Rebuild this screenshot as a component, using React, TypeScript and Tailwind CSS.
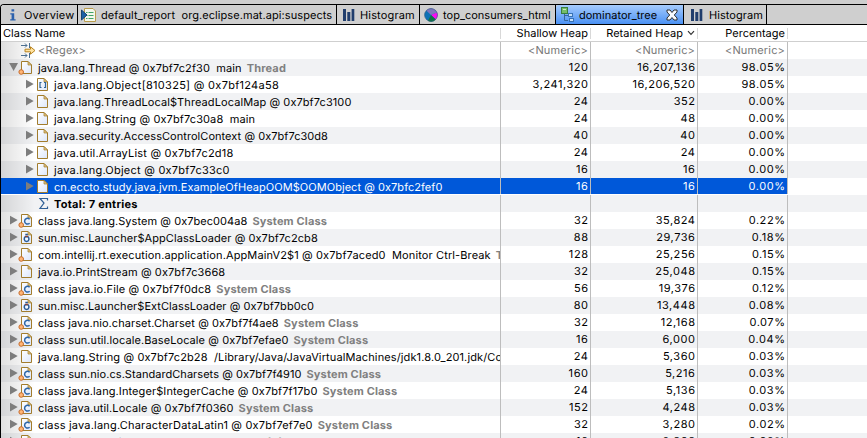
import type { ReactNode } from "react";

type IconKind = "page" | "pageRoot" | "array" | "class" | "loader" | "sum";

interface Row {
  icon: IconKind;
  name: string;
  spacing: string;
  tag?: string;
  nested?: boolean;
  open?: boolean;
  selected?: boolean;
  shallow?: string;
  retained?: string;
  percent?: string;
}

const rows: Row[] = [
  { icon: "pageRoot", spacing: "tracking-[0.09px]", name: "java.lang.Thread @ 0x7bf7c2f30  main", tag: "Thread", open: true, shallow: "120", retained: "16,207,136", percent: "98.05%" },
  { icon: "array", spacing: "tracking-[0.29px]", nested: true, name: "java.lang.Object[810325] @ 0x7bf124a58", shallow: "3,241,320", retained: "16,206,520", percent: "98.05%" },
  { icon: "page", spacing: "tracking-[0.09px]", nested: true, name: "java.lang.ThreadLocal$ThreadLocalMap @ 0x7bf7c3100", shallow: "24", retained: "352", percent: "0.00%" },
  { icon: "page", spacing: "tracking-[0.12px]", nested: true, name: "java.lang.String @ 0x7bf7c30a8  main", shallow: "24", retained: "48", percent: "0.00%" },
  { icon: "page", spacing: "tracking-[0.05px]", nested: true, name: "java.security.AccessControlContext @ 0x7bf7c30d8", shallow: "40", retained: "40", percent: "0.00%" },
  { icon: "page", spacing: "tracking-[0.2px]", nested: true, name: "java.util.ArrayList @ 0x7bf7c2d18", shallow: "24", retained: "24", percent: "0.00%" },
  { icon: "page", spacing: "tracking-[0.24px]", nested: true, name: "java.lang.Object @ 0x7bf7c33c0", shallow: "16", retained: "16", percent: "0.00%" },
  { icon: "page", spacing: "tracking-[0.05px]", nested: true, selected: true, name: "cn.eccto.study.java.jvm.ExampleOfHeapOOM$OOMObject @ 0x7bfc2fef0", shallow: "16", retained: "16", percent: "0.00%" },
  { icon: "sum", spacing: "tracking-[0.25px]", nested: true, name: "Total: 7 entries" },
  { icon: "class", spacing: "tracking-[0.06px]", name: "class java.lang.System @ 0x7bec004a8", tag: "System Class", shallow: "32", retained: "35,824", percent: "0.22%" },
  { icon: "loader", spacing: "tracking-[0.07px]", name: "sun.misc.Launcher$AppClassLoader @ 0x7bf7c2cb8", shallow: "88", retained: "29,736", percent: "0.18%" },
  { icon: "pageRoot", spacing: "tracking-[0.12px]", name: "com.intellij.rt.execution.application.AppMainV2$1 @ 0x7bf7aced0  Monitor Ctrl-Break", tag: "Thread", shallow: "128", retained: "25,256", percent: "0.15%" },
  { icon: "page", spacing: "tracking-[0.11px]", name: "java.io.PrintStream @ 0x7bf7c3668", shallow: "32", retained: "25,048", percent: "0.15%" },
  { icon: "class", spacing: "tracking-[0.15px]", name: "class java.io.File @ 0x7bf7f0dc8", tag: "System Class", shallow: "56", retained: "19,376", percent: "0.12%" },
  { icon: "loader", spacing: "tracking-[0.06px]", name: "sun.misc.Launcher$ExtClassLoader @ 0x7bf7bb0c0", shallow: "80", retained: "13,448", percent: "0.08%" },
  { icon: "class", spacing: "tracking-[0.06px]", name: "class java.nio.charset.Charset @ 0x7bf7f4ae8", tag: "System Class", shallow: "32", retained: "12,168", percent: "0.07%" },
  { icon: "class", spacing: "tracking-[0.08px]", name: "class sun.util.locale.BaseLocale @ 0x7bf7efae0", tag: "System Class", shallow: "16", retained: "6,000", percent: "0.04%" },
  { icon: "page", spacing: "tracking-[0.12px]", name: "java.lang.String @ 0x7bf7c2b28  /Library/Java/JavaVirtualMachines/jdk1.8.0_201.jdk/Contents", shallow: "24", retained: "5,360", percent: "0.03%" },
  { icon: "class", spacing: "tracking-[0.05px]", name: "class sun.nio.cs.StandardCharsets @ 0x7bf7f4910", tag: "System Class", shallow: "160", retained: "5,216", percent: "0.03%" },
  { icon: "class", spacing: "tracking-[0.1px]", name: "class java.lang.Integer$IntegerCache @ 0x7bf7f17b0", tag: "System Class", shallow: "24", retained: "5,136", percent: "0.03%" },
  { icon: "class", spacing: "tracking-[0.11px]", name: "class java.util.Locale @ 0x7bf7f0360", tag: "System Class", shallow: "152", retained: "4,248", percent: "0.03%" },
  { icon: "class", spacing: "tracking-[0.19px]", name: "class java.lang.CharacterDataLatin1 @ 0x7bf7ef7e0", tag: "System Class", shallow: "32", retained: "3,280", percent: "0.02%" },
  { icon: "class", spacing: "tracking-[0.1px]", name: "class java.lang.invoke.MethodType @ 0x7bf7f0e38", tag: "System Class", shallow: "16", retained: "2,808", percent: "0.02%" },
];

function NodeIcon({ kind }: { kind: IconKind }) {
  if (kind === "sum") {
    return (
      <svg width="14" height="17" viewBox="0 0 14 17" className="shrink-0" fill="none" stroke="#2f5f96">
        <path d="M11.5 5.5V3.5H4L8 8L4 13.5H11.5V11.5" strokeWidth="1.2" />
      </svg>
    );
  }
  const rooted = kind === "pageRoot" || kind === "class";
  return (
    <svg width="14" height="17" viewBox="0 0 14 17" className="shrink-0 overflow-visible">
      <defs>
        <linearGradient id="paper" x1="0" y1="0" x2="1" y2="1">
          <stop offset="0" stopColor="#ffffff" />
          <stop offset="1" stopColor="#dce6fb" />
        </linearGradient>
      </defs>
      <path d="M1.5 2.5H8L11.5 6V14.5H1.5Z" fill="url(#paper)" stroke="#a27c2c" />
      <path d="M8 2.5V6H11.5Z" fill="#e3c581" stroke="#a27c2c" strokeWidth="0.7" />
      {kind === "array" && <path d="M5.5 6.5H4V11.5H5.5M8 6.5H9.5V11.5H8" fill="none" stroke="#2f6496" strokeWidth="1.2" />}
      {kind === "class" && <path d="M9.6 7.2C8 5.6 4.6 6.2 4.6 9.2S8 12.8 9.6 11.2" fill="none" stroke="#2b65a8" strokeWidth="1.5" />}
      {kind === "loader" && (
        <>
          <path d="M5.3 5.5H7.9M5.2 7.8C3.7 9.2 3.9 12.6 6.6 12.6S9.5 9.2 8 7.8Z" fill="#f4f9ff" stroke="#285b96" strokeWidth="1.5" />
          <path d="M5.2 7.4H8" stroke="#8d4236" strokeWidth="1.4" />
        </>
      )}
      {rooted && <circle cx="1.2" cy="13" r="2.3" fill="#ffb778" stroke="#c96a28" />}
    </svg>
  );
}

function Expander({ open }: { open?: boolean }) {
  return (
    <svg width="12" height="17" viewBox="0 0 12 17" className="shrink-0" fill="#7d7d7d">
      {open ? <path d="M1.2 4H10L5.6 12Z" /> : <path d="M2 3.7V12.5L9.7 8Z" />}
    </svg>
  );
}

function InfoIcon() {
  return (
    <svg width="8" height="14" viewBox="0 0 8 14" fill="#2c62ad">
      <path d="M2.5 1.3H5.2V3.6H2.5ZM1.3 5.2H5.2V11.2H6.6V12.6H1.2V11.2H2.6V6.5H1.3Z" />
    </svg>
  );
}

function ReportIcon() {
  return (
    <svg width="17" height="16" viewBox="0 0 17 16" className="shrink-0">
      <path d="M4.5 1.5H13L15.5 4V14.5H4.5Z" fill="#f2f7ec" stroke="#b99b4c" />
      <path d="M6 5.5H7.5M8.5 5.5H13.5M6 8.5H7.5M8.5 8.5H13.5M6 11.5H7.5M8.5 11.5H13.5" stroke="#43a368" />
      <path d="M1.5 3V13L7 8Z" fill="#1c62a5" stroke="#17446f" />
    </svg>
  );
}

function HistogramIcon() {
  return (
    <svg width="12" height="12" viewBox="0 0 12 12" fill="#213e6d" className="shrink-0">
      <path d="M0 0H3V12H0ZM4.3 3H7.3V12H4.3ZM8.6 0H11.3V12H8.6Z" />
    </svg>
  );
}

function PieIcon() {
  return (
    <svg width="14" height="14" viewBox="0 0 14 14" className="shrink-0">
      <circle cx="7" cy="7" r="6.5" fill="#0d72b5" />
      <path d="M7 7L2.2 2.4A6.5 6.5 0 0 1 13 4.5Z" fill="#7e76bd" />
      <path d="M7 7L13 4.5A6.5 6.5 0 0 1 11.8 11.4Z" fill="#fb0bf2" />
      <path d="M7 7L11.8 11.4A6.5 6.5 0 0 1 4 12.8Z" fill="#0b7444" />
      <circle cx="7" cy="7" r="6.4" fill="none" stroke="#3d5b80" strokeWidth="0.6" />
    </svg>
  );
}

function TreeIcon() {
  return (
    <svg width="15" height="17" viewBox="0 0 15 17" className="shrink-0">
      <path d="M4.5 8V14.5H8M4.5 9.5H8" fill="none" stroke="#36669c" />
      <rect x="1.5" y="1.5" width="6" height="6" fill="#74bd69" stroke="#397f3e" />
      <path d="M3 3.5H6" stroke="#c7eac0" />
      <rect x="8.5" y="7.5" width="4" height="3" fill="#c5e0fa" stroke="#3973b5" />
      <rect x="9.5" y="12.5" width="4" height="3" fill="#c5e0fa" stroke="#3973b5" />
    </svg>
  );
}

function CloseIcon() {
  return (
    <svg width="12" height="12" viewBox="0 0 12 12" className="shrink-0">
      <path d="M1 1H4L6 3.5L8 1H11V3L8.3 6L11 9V11H8L6 8.5L4 11H1V9L3.7 6L1 3Z" fill="#f8fbff" stroke="#303030" />
    </svg>
  );
}

function FilterIcon() {
  return (
    <svg width="16" height="17" viewBox="0 0 16 17" fill="none" className="shrink-0">
      <path d="M1 3.5H7M5 1.5L7 3.5L5 5.5M9.5 1V6M1 13.5H7M5 11.5L7 13.5L5 15.5M9.5 11V16" stroke="#4c6f91" />
      <path d="M5 7.2H10.5V4.8L15 8.5L10.5 12.2V9.8H5Z" fill="#ffe3a0" stroke="#b9831f" />
    </svg>
  );
}

function Tab({ className, children }: { className: string; children: ReactNode }) {
  return <div className={`flex h-[19px] shrink-0 items-center whitespace-pre border-r border-black leading-[19px] ${className}`}>{children}</div>;
}

export default function App() {
  return (
    <div className="flex h-[438px] w-[867px] flex-col overflow-hidden bg-[#cecece] pt-1 font-['Inter','Liberation_Sans',sans-serif] text-[11px] leading-[17px] tracking-[0.15px] text-black [text-rendering:geometricPrecision]">
      <div className="flex min-h-0 flex-1 flex-col rounded-tl-[4px] border-l border-t border-black bg-white">
        <div className="flex h-5 shrink-0 rounded-tl-[3px] border-b border-black bg-[#cfcfcf]">
          <Tab className="w-[77px] pl-2">
            <InfoIcon />
            <span className="ml-[7px] pt-px">Overview</span>
          </Tab>
          <Tab className="w-[259px] pl-[2px]">
            <ReportIcon />
            <span className="ml-1 pt-px tracking-[0.07px]">default_report  org.eclipse.mat.api:suspects</span>
          </Tab>
          <Tab className="w-[83px] pl-[6px]">
            <HistogramIcon />
            <span className="ml-[5px] pt-px">Histogram</span>
          </Tab>
          <Tab className="w-[136px] pl-1">
            <PieIcon />
            <span className="ml-[5px] pt-px tracking-[0.02px]">top_consumers_html</span>
          </Tab>
          <Tab className="w-[128px] rounded-tl-[3px] bg-gradient-to-b from-[#a5cbfc] to-[#4a91f4] pl-1">
            <TreeIcon />
            <span className="ml-1 w-[87px] pt-px tracking-[0.02px]">dominator_tree</span>
            <CloseIcon />
          </Tab>
          <Tab className="w-[83px] pl-[7px]">
            <HistogramIcon />
            <span className="ml-[6px] pt-px tracking-[0.05px]">Histogram</span>
          </Tab>
        </div>

        <div className="flex h-[17px] shrink-0 items-center border-b border-[#cfcfcf]">
          <div className="h-[11px] w-[500px] border-r border-[#d8d8d8] pl-[2px] leading-[11px] tracking-[0.02px]">Class Name</div>
          <div className="h-[11px] w-[90px] border-r border-[#d8d8d8] pr-[2px] text-right leading-[11px] tracking-[0.02px]">Shallow Heap</div>
          <div className="flex h-[11px] w-[107px] items-center justify-end gap-1 border-r border-[#d8d8d8] pr-[2px] leading-[11px] tracking-[0.05px]">
            Retained Heap
            <svg width="8" height="6" viewBox="0 0 8 6" fill="none" stroke="#333333" strokeWidth="1.2">
              <path d="M1 1.2L4 4.3L7 1.2" />
            </svg>
          </div>
          <div className="h-[11px] w-[90px] border-r border-[#d8d8d8] pr-[2px] text-right leading-[11px] tracking-[0.02px]">Percentage</div>
        </div>

        <div className="flex h-[17px] shrink-0 text-[#777777]">
          <div className="flex w-[500px] border-r border-[#bdbdbd] bg-gradient-to-r from-[#dedede] to-white to-[34px] pl-[19px]">
            <FilterIcon />
            <span className="ml-[2px]">&lt;Regex&gt;</span>
          </div>
          <div className="w-[90px] border-r border-[#bdbdbd] pr-[2px] text-right">&lt;Numeric&gt;</div>
          <div className="w-[107px] border-r border-[#bdbdbd] pr-[2px] text-right">&lt;Numeric&gt;</div>
          <div className="w-[90px] border-r border-[#bdbdbd] pr-[2px] text-right">&lt;Numeric&gt;</div>
        </div>

        <div className="min-h-0 flex-1 overflow-hidden">
          {rows.map((row, i) => {
            const stripe = i % 2 === 0 ? "bg-[#f1f2f4]" : "bg-white";
            const fill = row.selected ? "bg-[#0058d9] text-white" : "";
            const edge = row.selected ? "h-4" : "h-[17px]";
            return (
              <div key={row.name} className={`flex h-[17px] ${stripe}`}>
                <div
                  className={`flex w-[500px] overflow-hidden whitespace-pre border-r border-[#bdbdbd] ${edge} ${
                    row.selected ? fill : "bg-gradient-to-r from-black/12 to-transparent to-[34px]"
                  } ${row.nested ? "pl-[23px]" : "pl-[7px]"}`}
                >
                  {row.icon === "sum" ? <span className="w-3 shrink-0" /> : <Expander open={row.open} />}
                  <NodeIcon kind={row.icon} />
                  <span className={`ml-1 leading-[18px] ${row.spacing} ${row.icon === "sum" ? "font-bold" : ""}`}>{row.name}</span>
                  {row.tag && <span className="ml-[5px] font-bold leading-[18px] text-[#808080]">{row.tag}</span>}
                </div>
                <div className={`w-[90px] border-r border-[#bdbdbd] pr-[1.5px] text-right tracking-[0.55px] ${edge} ${fill}`}>{row.shallow}</div>
                <div className={`w-[107px] border-r border-[#bdbdbd] pr-[1.5px] text-right tracking-[0.55px] ${edge} ${fill}`}>{row.retained}</div>
                <div className={`w-[90px] border-r border-[#bdbdbd] pr-[1.5px] text-right tracking-[0.55px] ${edge} ${fill}`}>{row.percent}</div>
              </div>
            );
          })}
        </div>
      </div>
    </div>
  );
}
